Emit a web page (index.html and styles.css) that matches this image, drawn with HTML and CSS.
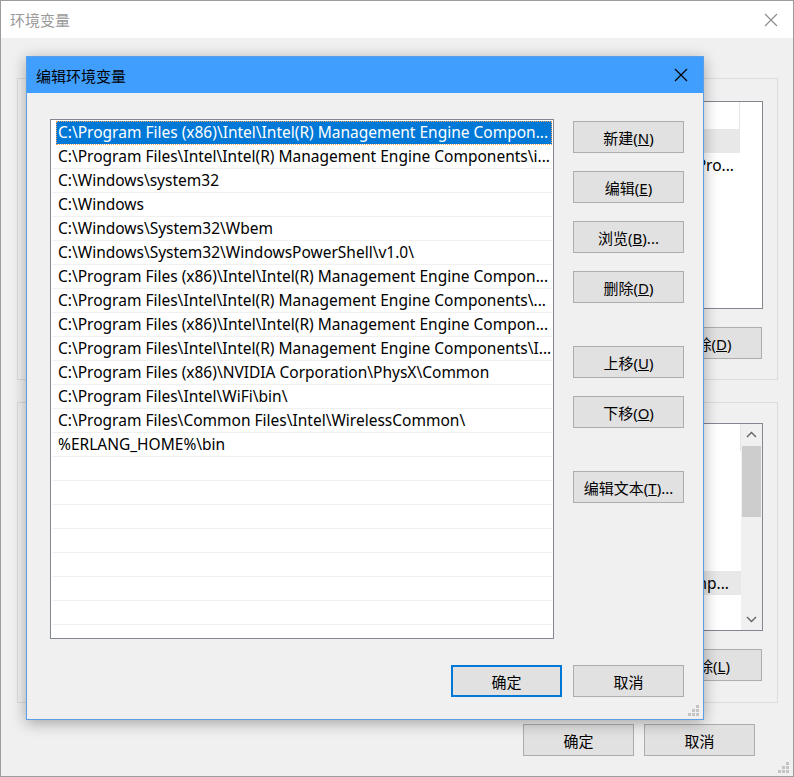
FILE: index.html
```html
<!DOCTYPE html>
<html lang="zh-CN">
<head>
    <meta charset="UTF-8">
    <title>环境变量</title>
    <link rel="stylesheet" href="styles.css">
</head>
<body>
    <div class="window">
        <div class="titlebar">
            <span class="title">环境变量</span>
            <svg class="close" width="14" height="14" viewBox="0 0 14 14"><path d="M1 1 L13 13 M13 1 L1 13" stroke="#8c8c8c" stroke-width="1.1" fill="none"/></svg>
        </div>
        <div class="win-body">
            <div class="group">
                <div class="listview">
                    <div class="lv-main">
                        <div class="lv-head"><span class="col name">变量</span><span class="col value">值</span></div>
                        <div class="lv-row sel"><span class="col name">OneDrive</span><span class="col value">C:\Users\Administrator\OneDrive</span></div>
                        <div class="lv-row"><span class="col name">Path</span><span class="col value tail"><span>C:\Users\Administrator\AppData\Local\Microsoft\WindowsApps;C:\Pro...</span></span></div>
                        <div class="lv-row"><span class="col name">TEMP</span><span class="col value">%USERPROFILE%\AppData\Local\Temp</span></div>
                        <div class="lv-row"><span class="col name">TMP</span><span class="col value">%USERPROFILE%\AppData\Local\Temp</span></div>
                    </div>
                    <div class="lv-gap"></div>
                </div>
                <div class="group-buttons">
                    <button class="btn">新建(<u>N</u>)...</button>
                    <button class="btn">编辑(<u>E</u>)...</button>
                    <button class="btn">删除(<u>D</u>)</button>
                </div>
            </div>
            <div class="group second">
                <div class="listview">
                    <div class="lv-main">
                        <div class="lv-head"><span class="col name">变量</span><span class="col value">值</span></div>
                        <div class="lv-row"><span class="col name">ComSpec</span><span class="col value">C:\Windows\system32\cmd.exe</span></div>
                        <div class="lv-row"><span class="col name">DriverData</span><span class="col value">C:\Windows\System32\Drivers\DriverData</span></div>
                        <div class="lv-row"><span class="col name">ERLANG_HOME</span><span class="col value">C:\Program Files\erl10.3</span></div>
                        <div class="lv-row"><span class="col name">NUMBER_OF_PROCESSORS</span><span class="col value">8</span></div>
                        <div class="lv-row"><span class="col name">OS</span><span class="col value">Windows_NT</span></div>
                        <div class="lv-row sel"><span class="col name">Path</span><span class="col value tail wide"><span>C:\Program Files (x86)\Intel\Intel(R) Management Engine Components\iCLS\;C:\Comp...</span></span></div>
                        <div class="lv-row"><span class="col name">PATHEXT</span><span class="col value">.COM;.EXE;.BAT;.CMD;.VBS;.VBE;.JS;.JSE;.WSF;.WSH;.MSC</span></div>
                    </div>
                    <div class="vscroll">
                        <svg class="arrow" width="21" height="22" viewBox="0 0 21 22"><path d="M6 13 L10.5 8.5 L15 13" stroke="#606060" stroke-width="1.3" fill="none"/></svg>
                        <div class="track"><div class="thumb"></div></div>
                        <svg class="arrow" width="21" height="22" viewBox="0 0 21 22"><path d="M6 9 L10.5 13.5 L15 9" stroke="#606060" stroke-width="1.3" fill="none"/></svg>
                    </div>
                </div>
                <div class="group-buttons">
                    <button class="btn">新建(<u>W</u>)...</button>
                    <button class="btn">编辑(<u>I</u>)...</button>
                    <button class="btn">删除(<u>L</u>)</button>
                </div>
            </div>
            <div class="footer">
                <button class="btn">确定</button>
                <button class="btn">取消</button>
            </div>
        </div>
        <svg class="grip" width="12" height="12" viewBox="0 0 12 12"><path d="M8 0h3v3H8z M4 4h3v3H4z M8 4h3v3H8z M0 8h3v3H0z M4 8h3v3H4z M8 8h3v3H8z" fill="#c4c4c4"/></svg>

        <!-- the edit dialog sits over the parent window -->
        <div class="dialog">
            <div class="dlg-title">
                <span>编辑环境变量</span>
                <svg class="close" width="14" height="14" viewBox="0 0 14 14"><path d="M1 1 L13 13 M13 1 L1 13" stroke="#000" stroke-width="1.2" fill="none"/></svg>
            </div>
            <div class="dlg-body">
                <div class="dlg-main">
                    <div class="listbox">
                        <div class="row sel">C:\Program Files (x86)\Intel\Intel(R) Management Engine Compon...</div>
                        <div class="row">C:\Program Files\Intel\Intel(R) Management Engine Components\i...</div>
                        <div class="row">C:\Windows\system32</div>
                        <div class="row">C:\Windows</div>
                        <div class="row">C:\Windows\System32\Wbem</div>
                        <div class="row">C:\Windows\System32\WindowsPowerShell\v1.0\</div>
                        <div class="row">C:\Program Files (x86)\Intel\Intel(R) Management Engine Compon...</div>
                        <div class="row">C:\Program Files\Intel\Intel(R) Management Engine Components\...</div>
                        <div class="row">C:\Program Files (x86)\Intel\Intel(R) Management Engine Compon...</div>
                        <div class="row">C:\Program Files\Intel\Intel(R) Management Engine Components\I...</div>
                        <div class="row">C:\Program Files (x86)\NVIDIA Corporation\PhysX\Common</div>
                        <div class="row">C:\Program Files\Intel\WiFi\bin\</div>
                        <div class="row">C:\Program Files\Common Files\Intel\WirelessCommon\</div>
                        <div class="row">%ERLANG_HOME%\bin</div>
                        <div class="row"></div>
                        <div class="row"></div>
                        <div class="row"></div>
                        <div class="row"></div>
                        <div class="row"></div>
                        <div class="row"></div>
                        <div class="row"></div>
                        <div class="row"></div>
                    </div>
                    <div class="side-buttons">
                        <button class="btn">新建(<u>N</u>)</button>
                        <button class="btn">编辑(<u>E</u>)</button>
                        <button class="btn">浏览(<u>B</u>)...</button>
                        <button class="btn">删除(<u>D</u>)</button>
                        <button class="btn sep">上移(<u>U</u>)</button>
                        <button class="btn">下移(<u>O</u>)</button>
                        <button class="btn sep">编辑文本(<u>T</u>)...</button>
                    </div>
                </div>
                <div class="dlg-footer">
                    <button class="btn default">确定</button>
                    <button class="btn">取消</button>
                </div>
            </div>
            <svg class="grip" width="12" height="12" viewBox="0 0 12 12"><path d="M8 0h3v3H8z M4 4h3v3H4z M8 4h3v3H8z M0 8h3v3H0z M4 8h3v3H4z M8 8h3v3H8z" fill="#c4c4c4"/></svg>
        </div>
    </div>
</body>
</html>
```

FILE: styles.css
```css
* {
    box-sizing: border-box;
}
body {
    margin: 0;
    background-color: #f0f0f0;
    font-family: "Noto Sans", "Noto Sans CJK SC", sans-serif;
    font-size: 15px;
    color: #000;
}
.window {
    position: relative;
    width: 794px;
    height: 777px;
    border: 1px solid #9c9c9c;
    background-color: #f0f0f0;
    overflow: hidden;
}
.titlebar {
    height: 37px;
    background-color: #fff;
    display: flex;
    align-items: center;
    justify-content: space-between;
    padding: 0 15px 0 9px;
}
.titlebar .title {
    color: #9a9a9a;
}
.win-body {
    padding: 40px 15px 0 16px;
}
.group {
    height: 302px;
    border: 1px solid #dcdcdc;
    padding: 22px 14px 0 13px;
}
.group.second {
    height: 301px;
    margin-top: 22px;
    padding-top: 20px;
}
.listview {
    height: 208px;
    border: 1px solid #828790;
    background-color: #fff;
    display: flex;
    overflow: hidden;
    font-size: 15.5px;
}
.lv-main {
    flex: 1;
    min-width: 0;
}
.lv-gap {
    width: 22px;
}
.lv-head {
    height: 27px;
    display: flex;
    align-items: center;
}
.lv-head .col.value {
    align-self: stretch;
    display: flex;
    align-items: center;
    border-right: 1px solid #e5e5e5;
}
.lv-row {
    height: 24px;
    display: flex;
    align-items: center;
}
.lv-row.sel {
    background-color: #e8e8e8;
}
.col {
    white-space: nowrap;
    overflow: hidden;
    text-overflow: ellipsis;
    padding-left: 6px;
}
.col.name {
    width: 190px;
    flex-shrink: 0;
}
.col.value {
    flex: 1;
    min-width: 0;
    padding-right: 2px;
}
/* long values: keep the tail ("...") against the column edge */
.col.value.tail {
    display: flex;
    justify-content: flex-end;
    padding-right: 6px;
}
.col.value.tail.wide {
    padding-right: 12px;
}
.col.value.tail span {
    flex-shrink: 0;
}
.vscroll {
    width: 21px;
    display: flex;
    flex-direction: column;
    background-color: #f0f0f0;
}
.vscroll .arrow {
    display: block;
    flex-shrink: 0;
}
.vscroll .track {
    flex: 1;
    padding: 0 1px;
}
.vscroll .thumb {
    height: 71px;
    background-color: #cdcdcd;
}
.group-buttons {
    display: flex;
    justify-content: flex-end;
    gap: 10px;
    margin-top: 18px;
    padding-right: 1px;
}
.btn {
    width: 111px;
    height: 32px;
    border: 1px solid #adadad;
    background-color: #e1e1e1;
    font-family: inherit;
    font-size: 15px;
    color: #000;
    padding: 0;
    white-space: nowrap;
}
.footer {
    display: flex;
    justify-content: flex-end;
    gap: 10px;
    margin-top: 21px;
    padding-right: 23px;
}
.grip {
    position: absolute;
    right: 3px;
    bottom: 2px;
}
.dialog {
    position: absolute;
    left: 25px;
    top: 55px;
    width: 678px;
    height: 664px;
    border: 1px solid #5a9fe8;
    background-color: #f0f0f0;
    box-shadow: 0 3px 14px rgba(0, 0, 0, 0.32);
}
.dlg-title {
    height: 36px;
    background-color: #409eff;
    display: flex;
    align-items: center;
    justify-content: space-between;
    padding: 0 15px 0 9px;
}
.dlg-body {
    padding: 26px 19px 0 23px;
}
.dlg-main {
    display: flex;
}
.listbox {
    width: 504px;
    height: 520px;
    border: 1px solid #828790;
    background-color: #fff;
    padding: 1px 1px 0;
    overflow: hidden;
    font-size: 15.5px;
}
.row {
    height: 24px;
    line-height: 23px;
    border-bottom: 1px solid #f0f0f0;
    padding-left: 6px;
    white-space: nowrap;
    overflow: hidden;
}
.row.sel {
    margin-left: 4px;
    padding-left: 2px;
    background-color: #0078d7;
    color: #fff;
    border-bottom-color: #fff;
    outline: 1px dotted #f5a25a;
    outline-offset: -1px;
}
.side-buttons {
    display: flex;
    flex-direction: column;
    gap: 18px;
    margin-left: 19px;
    padding-top: 2px;
}
.side-buttons .sep {
    margin-top: 25px;
}
.dlg-footer {
    display: flex;
    justify-content: flex-end;
    gap: 11px;
    margin-top: 26px;
}
.btn.default {
    border: 2px solid #0078d7;
}
```
